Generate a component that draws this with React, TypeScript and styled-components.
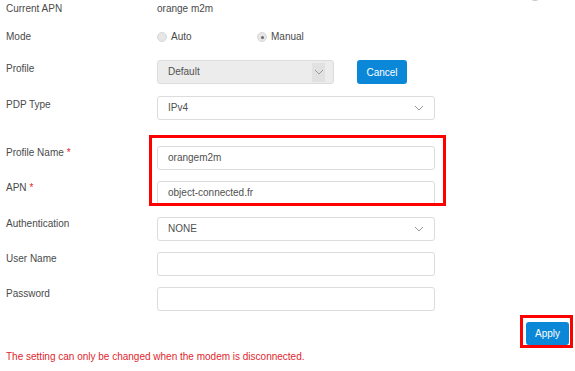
import React from 'react'
import styled, { createGlobalStyle } from 'styled-components'

const GlobalStyle = createGlobalStyle`
  html, body {
    margin: 0;
    padding: 0;
    background: #fff;
  }
  body {
    font-family: "Liberation Sans", Arial, sans-serif;
    font-size: 10px;
    line-height: 12px;
    color: #4a4a4a;
  }
`

const Page = styled.div`
  position: relative;
  width: 575px;
  height: 371px;
  box-sizing: border-box;
  padding: 3px 2px 0 6px;
  overflow: hidden;
  display: flex;
  flex-direction: column;
`

const HelpIcon = styled.span`
  position: absolute;
  left: 528px;
  top: -13px;
  width: 14px;
  height: 14px;
  border-radius: 50%;
  border: 1px solid #c4c4c4;
  box-sizing: border-box;
`

const Row = styled.div<{ $top?: number }>`
  display: flex;
  align-items: flex-start;
  margin-top: ${({ $top }) => $top ?? 0}px;
`

const Label = styled.div<{ $pad?: number }>`
  flex: none;
  width: 151px;
  padding-top: ${({ $pad }) => $pad ?? 0}px;
`

const Required = styled.span`
  color: #e0262d;
  margin-left: 3px;
`

const Value = styled.div`
  color: #4a4a4a;
`

const RadioGroup = styled.div`
  display: flex;
  align-items: center;
`

const RadioOption = styled.label`
  display: flex;
  align-items: center;
  width: 100px;
  gap: 4px;
`

const RadioDot = styled.span<{ $checked?: boolean }>`
  position: relative;
  width: 10px;
  height: 10px;
  border-radius: 50%;
  background: #e6e6e6;
  border: 1px solid #d8d8d8;
  box-sizing: border-box;

  &::after {
    content: '';
    display: ${({ $checked }) => ($checked ? 'block' : 'none')};
    position: absolute;
    left: 2.5px;
    top: 2.5px;
    width: 3px;
    height: 3px;
    border-radius: 50%;
    background: #6a6a6a;
  }
`

const Control = styled.div<{ $width?: number; $disabled?: boolean }>`
  flex: none;
  width: ${({ $width }) => $width ?? 278}px;
  height: 24px;
  box-sizing: border-box;
  border: 1px solid #dcdcdc;
  border-radius: 3px;
  background: ${({ $disabled }) => ($disabled ? '#ececec' : '#fff')};
  display: flex;
  align-items: center;
  padding-left: 10px;
  color: #505050;
`

const ControlText = styled.span`
  flex: 1;
`

const ArrowBox = styled.span<{ $shaded?: boolean }>`
  flex: none;
  width: 13px;
  height: 19px;
  margin-right: ${({ $shaded }) => ($shaded ? 8 : 9)}px;
  display: flex;
  align-items: center;
  justify-content: center;
  background: ${({ $shaded }) => ($shaded ? '#e1e1e1' : 'transparent')};
`

const Button = styled.button`
  flex: none;
  height: 24px;
  padding: 0;
  border: none;
  border-radius: 3px;
  background: #0b87d8;
  color: #fff;
  font-family: "Liberation Sans", Arial, sans-serif;
  font-size: 10px;
  cursor: pointer;
`

const CancelButton = styled(Button)`
  width: 50px;
  margin-left: 23px;
`

const ApplyButton = styled(Button)`
  width: 43px;
  height: 23px;
  display: block;
`

const Highlight = styled.div`
  position: relative;
  margin-top: 26px;

  &::after {
    content: '';
    position: absolute;
    left: 143px;
    top: -11px;
    width: 297px;
    height: 71px;
    box-sizing: border-box;
    border: 3px solid #ff0000;
    pointer-events: none;
  }
`

const ApplyRow = styled.div`
  display: flex;
  justify-content: flex-end;
  margin-top: 4px;
`

const ApplyFrame = styled.div`
  border: 3px solid #ff0000;
  padding: 4px 1px 0 3px;
`

const Notice = styled.div`
  margin-top: 3px;
  color: #e0262d;
`

const Chevron = () => (
  <svg width="10" height="6" viewBox="0 0 10 6">
    <path d="M1 1l4 4 4-4" fill="none" stroke="#999" strokeWidth="1" />
  </svg>
)

type SelectProps = {
  value: string
  width?: number
  disabled?: boolean
}

const Select: React.FC<SelectProps> = ({ value, width, disabled }) => (
  <Control $width={width} $disabled={disabled}>
    <ControlText>{value}</ControlText>
    <ArrowBox $shaded={disabled}>
      <Chevron />
    </ArrowBox>
  </Control>
)

export default function App() {
  return (
    <>
      <GlobalStyle />
      <Page>
        <HelpIcon />
        <Row>
          <Label>Current APN</Label>
          <Value>orange m2m</Value>
        </Row>
        <Row $top={16}>
          <Label>Mode</Label>
          <RadioGroup>
            <RadioOption>
              <RadioDot />
              Auto
            </RadioOption>
            <RadioOption>
              <RadioDot $checked />
              Manual
            </RadioOption>
          </RadioGroup>
        </Row>
        <Row $top={17}>
          <Label $pad={3}>Profile</Label>
          <Select value="Default" width={177} disabled />
          <CancelButton>Cancel</CancelButton>
        </Row>
        <Row $top={12}>
          <Label $pad={3}>PDP Type</Label>
          <Select value="IPv4" />
        </Row>
        <Highlight>
          <Row>
            <Label $pad={1}>
              Profile Name<Required>*</Required>
            </Label>
            <Control>orangem2m</Control>
          </Row>
          <Row $top={11}>
            <Label $pad={1}>
              APN<Required>*</Required>
            </Label>
            <Control>object-connected.fr</Control>
          </Row>
        </Highlight>
        <Row $top={12}>
          <Label $pad={1}>Authentication</Label>
          <Select value="NONE" />
        </Row>
        <Row $top={11}>
          <Label $pad={1}>User Name</Label>
          <Control />
        </Row>
        <Row $top={11}>
          <Label $pad={1}>Password</Label>
          <Control />
        </Row>
        <ApplyRow>
          <ApplyFrame>
            <ApplyButton>Apply</ApplyButton>
          </ApplyFrame>
        </ApplyRow>
        <Notice>The setting can only be changed when the modem is disconnected.</Notice>
      </Page>
    </>
  )
}
